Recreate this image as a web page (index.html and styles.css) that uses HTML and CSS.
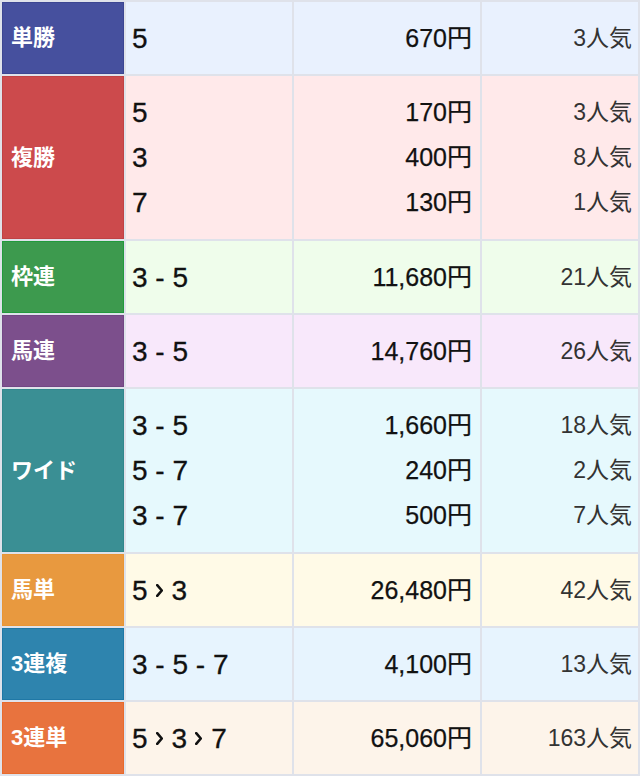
FILE: index.html
```html
<!DOCTYPE html>
<html lang="ja">
<head>
<meta charset="utf-8">
<title>払戻金</title>
<link rel="stylesheet" href="styles.css">
</head>
<body>
<div class="table">
  <div class="row r-tan">
    <div class="label">単勝</div>
    <div class="cell num"><span>5</span></div>
    <div class="cell price"><span>670円</span></div>
    <div class="cell pop"><span>3人気</span></div>
  </div>
  <div class="row tall r-fuku">
    <div class="label">複勝</div>
    <div class="cell num"><span>5</span><span>3</span><span>7</span></div>
    <div class="cell price"><span>170円</span><span>400円</span><span>130円</span></div>
    <div class="cell pop"><span>3人気</span><span>8人気</span><span>1人気</span></div>
  </div>
  <div class="row r-waku">
    <div class="label">枠連</div>
    <div class="cell num"><span>3 - 5</span></div>
    <div class="cell price"><span>11,680円</span></div>
    <div class="cell pop"><span>21人気</span></div>
  </div>
  <div class="row r-umaren">
    <div class="label">馬連</div>
    <div class="cell num"><span>3 - 5</span></div>
    <div class="cell price"><span>14,760円</span></div>
    <div class="cell pop"><span>26人気</span></div>
  </div>
  <div class="row tall r-wide">
    <div class="label">ワイド</div>
    <div class="cell num"><span>3 - 5</span><span>5 - 7</span><span>3 - 7</span></div>
    <div class="cell price"><span>1,660円</span><span>240円</span><span>500円</span></div>
    <div class="cell pop"><span>18人気</span><span>2人気</span><span>7人気</span></div>
  </div>
  <div class="row r-umatan">
    <div class="label">馬単</div>
    <div class="cell num"><span>5<svg class="chev" viewBox="0 0 7 13" width="7" height="13"><polyline points="1.2,1.2 5.8,6.5 1.2,11.8"/></svg>3</span></div>
    <div class="cell price"><span>26,480円</span></div>
    <div class="cell pop"><span>42人気</span></div>
  </div>
  <div class="row r-trio">
    <div class="label">3連複</div>
    <div class="cell num"><span>3 - 5 - 7</span></div>
    <div class="cell price"><span>4,100円</span></div>
    <div class="cell pop"><span>13人気</span></div>
  </div>
  <div class="row r-tierce">
    <div class="label">3連単</div>
    <div class="cell num"><span>5<svg class="chev" viewBox="0 0 7 13" width="7" height="13"><polyline points="1.2,1.2 5.8,6.5 1.2,11.8"/></svg>3<svg class="chev" viewBox="0 0 7 13" width="7" height="13"><polyline points="1.2,1.2 5.8,6.5 1.2,11.8"/></svg>7</span></div>
    <div class="cell price"><span>65,060円</span></div>
    <div class="cell pop"><span>163人気</span></div>
  </div>
</div>
</body>
</html>
```

FILE: styles.css
```css
* { box-sizing: border-box; }
html, body { margin: 0; padding: 0; background: #ffffff; }
body {
  font-family: "Liberation Sans", "Noto Sans CJK JP", sans-serif;
  width: 640px;
}
.table {
  display: flex;
  flex-direction: column;
  gap: 2px;
  padding: 2px;
  background: #dfe2ea;
}
.row {
  display: grid;
  grid-template-columns: 122px 166px 186px 156px;
  gap: 2px;
  height: 72px;
}
.row.tall { height: 163px; }
.label {
  display: flex;
  align-items: center;
  padding: 0 0 0 8px;
  color: #ffffff;
  font-weight: bold;
  font-size: 22px;
  line-height: 24px;
  border: 1px solid transparent;
}
.cell {
  display: flex;
  flex-direction: column;
  justify-content: center;
}
.cell span {
  display: block;
  height: 45px;
  line-height: 45px;
  white-space: pre;
}
.num {
  padding-left: 6px;
  font-size: 28px;
  color: #111111;
  -webkit-text-stroke: 0.3px #111111;
}
.price {
  align-items: flex-end;
  padding-right: 8px;
  font-size: 25px;
  color: #111111;
  -webkit-text-stroke: 0.25px #111111;
}
.pop {
  align-items: flex-end;
  padding-right: 6px;
  font-size: 23px;
  color: #333333;
}
.chev {
  display: inline-block;
  vertical-align: 3px;
  margin: 0 9px 0 8px;
}
.chev polyline {
  fill: none;
  stroke: #111111;
  stroke-width: 2.6;
  stroke-linecap: round;
  stroke-linejoin: round;
}

.r-tan .label { background: #46509e; border-color: #3c4692; }
.r-tan .cell { background: #e9f1fe; }
.r-fuku .label { background: #cc4a4c; border-color: #c04245; }
.r-fuku .cell { background: #ffe9ea; }
.r-waku .label { background: #3d9a4e; border-color: #229a3c; }
.r-waku .cell { background: #effdeb; }
.r-umaren .label { background: #7c4f8c; border-color: #724684; }
.r-umaren .cell { background: #f8e8fb; }
.r-wide .label { background: #3a8f94; border-color: #31878c; }
.r-wide .cell { background: #e6f9fd; }
.r-umatan .label { background: #e8993f; border-color: #e99534; }
.r-umatan .cell { background: #fffae7; }
.r-trio .label { background: #2e84ae; border-color: #1f78a6; }
.r-trio .cell { background: #e7f4fe; }
.r-tierce .label { background: #e8733e; border-color: #e86a2c; }
.r-tierce .cell { background: #fdf4ea; }
```
